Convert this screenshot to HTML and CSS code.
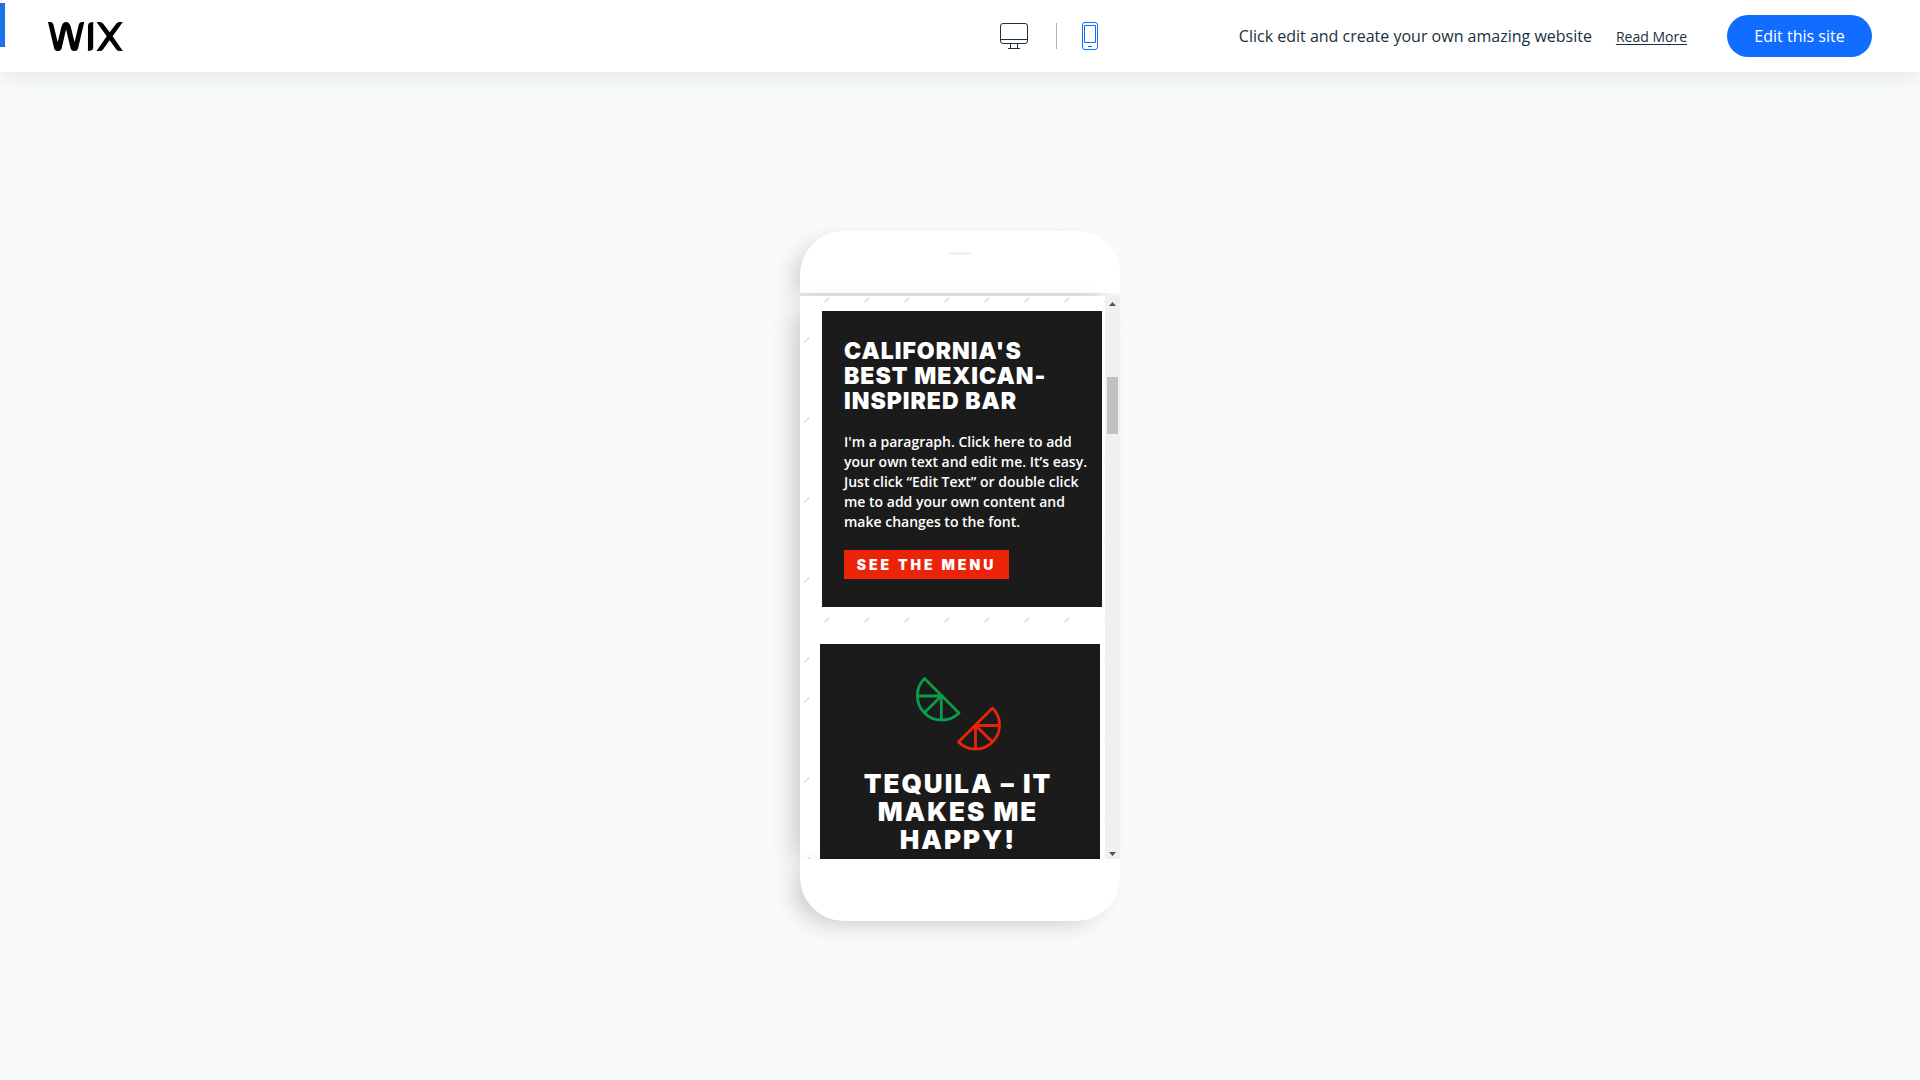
FILE: index.html
```html
<!DOCTYPE html>
<html lang="en">
<head>
<meta charset="utf-8">
<meta name="viewport" content="width=device-width, initial-scale=1">
<title>Wix Template Preview</title>
<link rel="stylesheet" href="styles.css">
</head>
<body>
<header class="topbar">
  <span class="focus-mark" aria-hidden="true"></span>
  <a class="logo" href="#" aria-label="Wix">
    <svg width="75" height="29" viewBox="0 0 76 30" preserveAspectRatio="none">
      <path d="M0 0h2.500q2.400 0 3 2.600L9.800 21 13.500 5.500Q14.800 0 18.300 0T23.200 5.500L26.900 21 31.200 2.600Q31.800 0 34.200 0H36.700L30.600 27Q29.900 30 27 30H26.500Q23.500 30 22.800 27L18.300 7.500 13.900 27Q13.200 30 10.200 30H9.700Q6.800 30 6.100 27Z"/>
      <path d="M45.800 0V25.500Q45.800 29 43.200 29.500L40.500 30V4.500Q40.500 1 43 .4Z"/>
      <path d="M49.200 0H52.500Q54.500 0 55.700 1.600L62.500 10.700 69.300 1.600Q70.500 0 72.500 0H75.800L65.500 14.700 75.800 30H72.500Q70.500 30 69.300 28.400L62.500 18.900 55.700 28.400Q54.500 30 52.500 30H49.200L59.500 14.700Z"/>
    </svg>
  </a>
  <div class="devices">
    <button class="device" type="button" aria-label="Desktop view">
      <svg width="28" height="26" viewBox="0 0 28 26" fill="none" stroke="#20303c">
        <rect x=".5" y=".5" width="27" height="20" rx="2.500"/>
        <path d="M.5 16.500h27M10.500 20.500v4.500M17.500 20.500v4.500M8 25.500h12"/>
      </svg>
    </button>
    <span class="divider"></span>
    <button class="device" type="button" aria-label="Mobile view" aria-pressed="true">
      <svg width="16" height="28" viewBox="0 0 16 28" fill="none" stroke="#116dff">
        <rect x=".5" y=".5" width="15" height="27" rx="2.500"/>
        <path d="M2.500 3.500h11v17h-11zM6 24.500h4"/>
      </svg>
    </button>
  </div>
  <div class="actions">
    <p class="tagline">Click edit and create your own amazing website</p>
    <a class="more" href="#">Read More</a>
    <button class="edit" type="button">Edit this site</button>
  </div>
</header>

<main class="stage">
  <div class="phone">
    <div class="cap cap-top"><span class="speaker"></span></div>
    <div class="screen">
      <div class="page">
        <section class="about">
          <div class="card card-about">
            <h1>California's best Mexican-inspired bar</h1>
            <p>I'm a paragraph. Click here to add your own text and edit me. It’s easy. Just click “Edit Text” or double click me to add your own content and make changes to the font.</p>
            <a class="menu-link" href="#">See the menu</a>
          </div>
        </section>
        <section class="tequila">
          <div class="card card-tequila">
            <svg class="limes" width="88" height="76" viewBox="914 676 88 76" fill="none" stroke-width="2.800" stroke-linejoin="round">
              <path stroke="#0a9b4b" d="M924.500 678.500 959 713A24 24 0 0 1 924.500 678.500ZM941.300 696H917.500M941.300 696V720.500M941.300 696 924.500 712.500"/>
              <path stroke="#eb2409" d="M992.500 708 958.500 742A24 24 0 0 0 992.500 708ZM975.500 725.500H1000M975.500 725.500V749M975.500 725.500 992.500 742"/>
            </svg>
            <h2>Tequila – it makes me happy!</h2>
          </div>
        </section>
      </div>
      <div class="scrollbar" aria-hidden="true">
        <svg width="7" height="4" viewBox="0 0 7 4"><path d="M0 4 3.500 0 7 4z" fill="#505050"/></svg>
        <span class="thumb"></span>
        <svg width="7" height="4" viewBox="0 0 7 4"><path d="M0 0h7L3.500 4z" fill="#505050"/></svg>
      </div>
    </div>
    <div class="cap cap-bottom"></div>
  </div>
</main>
</body>
</html>
```
FILE: styles.css
```css
* { box-sizing: border-box; }

body {
  margin: 0;
  min-height: 100vh;
  display: flex;
  flex-direction: column;
  background: #f9fbfa;
  color: #20303c;
  font-family: "Open Sans", "Noto Sans", sans-serif;
}

h1, h2, p { margin: 0; }

button { border: 0; background: none; padding: 0; font: inherit; cursor: pointer; }

.topbar {
  position: relative;
  display: grid;
  grid-template-columns: 1fr auto 1fr;
  align-items: center;
  height: 72px;
  padding: 0 48px;
  background: #fff;
  box-shadow: 0 6px 20px rgba(59, 76, 105, .1);
}

.focus-mark {
  position: absolute;
  left: 0;
  top: 3px;
  width: 5px;
  height: 44px;
  background: #1a73e8;
}

.logo { display: flex; justify-self: start; }

.devices { display: flex; align-items: center; gap: 26px; padding-left: 178px; }
.device { display: flex; }
.divider { width: 1px; height: 26px; background: #a3b7c7; margin: 0 -1px 0 2px; }

.actions { display: flex; align-items: center; justify-content: flex-end; white-space: nowrap; }
.tagline { font-size: 16px; }
.more { margin: 0 40px 0 24px; font-size: 14px; color: inherit; text-underline-offset: 2px; }

.edit {
  width: 145px;
  height: 42px;
  border-radius: 21px;
  background: #116dff;
  color: #fff;
  font-size: 16px;
}

.stage { flex: 1; display: flex; align-items: center; justify-content: center; }

.phone { width: 320px; display: flex; flex-direction: column; }

.cap, .screen { background: #fff; box-shadow: -12px 8px 24px -6px rgba(0, 0, 0, .2); }
.cap { height: 62px; }
.cap-top { display: flex; justify-content: center; border-radius: 44px 44px 0 0; margin-bottom: 3px; }
.cap-bottom { border-radius: 0 0 44px 44px; }
.speaker { width: 24px; height: 3px; margin-top: 21px; border-radius: 2px; background: #eff2f1; }

.screen { display: flex; height: 563px; }

.page { flex: 1; height: 100%; overflow: hidden; }

.about, .tequila {
  --dashes: url("data:image/svg+xml,%3Csvg xmlns='http://www.w3.org/2000/svg' width='40' height='80'%3E%3Cpath d='M24.500 6.500l5-5M4.500 46.500l5-5' stroke='%23dcdcdc' stroke-width='1.500'/%3E%3C/svg%3E");
  --dash: url("data:image/svg+xml,%3Csvg xmlns='http://www.w3.org/2000/svg' width='6' height='6'%3E%3Cpath d='M.5 5.500l5-5' stroke='%23dcdcdc' stroke-width='1.500'/%3E%3C/svg%3E");
}

.about {
  height: 348px;
  padding: 15px 3px 0 22px;
  background: var(--dashes);
}

.tequila {
  padding: 0 5px 0 20px;
  background: var(--dash) 4px 13px no-repeat, var(--dashes) 0 12px;
}

.card { background: #1b1b1b; color: #fff; }

.card-about { height: 296px; padding: 28px 12px 0 22px; }

.card h1, .card h2, .menu-link { font-family: Inter, sans-serif; font-weight: 900; text-transform: uppercase; }
.card h1 { padding-right: 24px; font-size: 23px; line-height: 25px; letter-spacing: 1px; }

.card p { margin-top: 18px; font-size: 14px; line-height: 20px; font-weight: 600; }

.menu-link {
  display: flex;
  align-items: center;
  justify-content: center;
  width: 165px;
  height: 29px;
  margin-top: 18px;
  background: #eb2409;
  color: #fff;
  font-size: 14px;
  letter-spacing: 3px;
  text-decoration: none;
}

.card-tequila { height: 260px; padding: 32px 36px 0 32px; text-align: center; }
.limes { display: block; margin: 0 auto; }
.card h2 { margin-top: 18px; font-size: 26px; line-height: 28px; letter-spacing: 2px; }

.scrollbar {
  width: 15px;
  display: flex;
  flex-direction: column;
  align-items: center;
  padding: 6px 2px 3px;
  background: #f0f0f0;
}
.scrollbar .thumb { width: 11px; height: 57px; margin: 71px 0 auto; background: #c1c1c1; }
```
